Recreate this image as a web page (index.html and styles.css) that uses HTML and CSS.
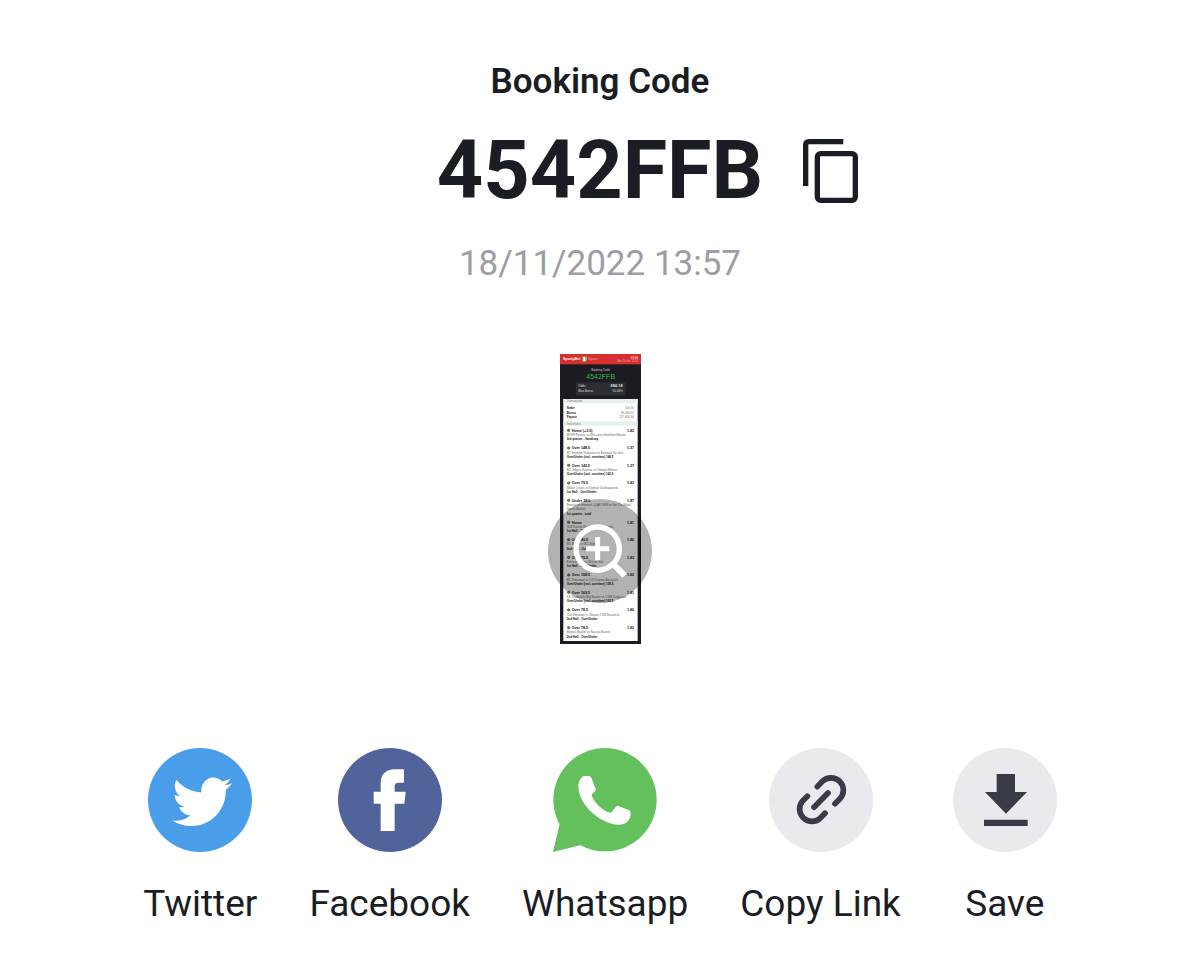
FILE: index.html
```html
<!DOCTYPE html>
<html lang="en">

<head>
    <meta charset="UTF-8">
    <meta name="viewport" content="width=device-width, initial-scale=1">
    <title>Booking Code</title>
    <link rel="stylesheet" href="styles.css">
</head>

<body>
    <main class="booking">
        <h1 class="booking-title">Booking Code</h1>
        <div class="code-row">
            <p class="code">4542FFB</p>
            <button class="copy-button" type="button" aria-label="Copy booking code">
                <svg class="copy-icon" viewBox="0 0 165 192" fill="none" stroke="currentColor" stroke-width="16">
                    <path d="M8 141V18Q8 8 18 8H121" />
                    <rect x="43" y="44" width="114" height="140" rx="10" />
                </svg>
            </button>
        </div>
        <time class="date" datetime="2022-11-18T13:57">18/11/2022 13:57</time>

        <div class="preview">
            <!-- ticket preview -->
            <svg class="ticket" viewBox="0 0 243 870" role="img" aria-label="Ticket 4542FFB">
                <rect width="243" height="870" fill="#1b1c22" />
                <rect width="243" height="31" fill="#d5302f" />
                <g fill="#fff">
                    <text class="t-brand" x="9" y="19">SportyBet</text>
                    <rect x="66" y="8" width="14" height="14" rx="2" />
                    <rect x="66" y="8" width="4" height="14" fill="#7d9a55" />
                    <rect x="76" y="8" width="4" height="14" fill="#7d9a55" />
                    <text class="t-tiny" x="84" y="18" fill="#f3a5a3">Nigeria</text>
                    <text class="t-tiny" x="234" y="14" text-anchor="end">13:56</text>
                    <text class="t-tiny" x="234" y="24" text-anchor="end" fill="#f3a5a3">Bet Ticket 1122</text>
                </g>
                <text class="t-label" x="122" y="51" text-anchor="middle" fill="#ccc">Booking Code</text>
                <text class="t-code" x="122" y="76" text-anchor="middle">4542FFB</text>
                <rect x="48" y="85" width="149" height="40" fill="#2c2e36" />
                <g fill="#ddd">
                    <text class="t-label" x="55" y="99">Odds</text>
                    <text class="t-label" x="55" y="115">Max Bonus</text>
                    <text class="t-odds" x="188" y="99" text-anchor="end">884.18</text>
                    <text class="t-tiny" x="188" y="114" text-anchor="end">90.00%</text>
                </g>
                <rect x="10" y="135" width="223" height="726" fill="#fff" />
                <rect x="10" y="135" width="223" height="13" fill="#e8f0ec" />
                <rect x="10" y="202" width="223" height="13" fill="#e8f0ec" />
                <g fill="#777">
                    <text class="t-label" x="20" y="145">Transaction</text>
                    <text class="t-label" x="20" y="212">Selections</text>
                    <text class="t-label" x="222" y="165" text-anchor="end">100.00</text>
                    <text class="t-label" x="222" y="179" text-anchor="end">39,066.87</text>
                    <text class="t-label" x="222" y="192" text-anchor="end">127,486.84</text>
                </g>
                <g class="t-rule">
                    <text x="20" y="165">Stake</text>
                    <text x="20" y="179">Bonus</text>
                    <text x="20" y="192">Payout</text>
                </g>

                <g transform="translate(0 233)">
                    <circle class="t-dot" cx="26" cy="-4" r="4" />
                    <text class="t-pick" x="35">Home (+3.5)</text>
                    <text class="t-pick" x="222" text-anchor="end">1.82</text>
                    <text class="t-teams" x="20" y="13">MTSP Pozitus vs Maccinno Brooklen Moose</text>
                    <text class="t-rule" x="20" y="26">3rd quarter - handicap</text>
                </g>
                <g transform="translate(0 286)">
                    <circle class="t-dot" cx="26" cy="-4" r="4" />
                    <text class="t-pick" x="35">Over 148.5</text>
                    <text class="t-pick" x="222" text-anchor="end">1.37</text>
                    <text class="t-teams" x="20" y="13">BC Fenham Salpanes vs Bauman Tai Jeni</text>
                    <text class="t-rule" x="20" y="26">Over/Under (incl. overtime) 148.5</text>
                </g>
                <g transform="translate(0 338)">
                    <circle class="t-dot" cx="26" cy="-4" r="4" />
                    <text class="t-pick" x="35">Over 143.5</text>
                    <text class="t-pick" x="222" text-anchor="end">1.37</text>
                    <text class="t-teams" x="20" y="13">BC Zalgiris Kaunas vs Olimpia Milano</text>
                    <text class="t-rule" x="20" y="26">Over/Under (incl. overtime) 143.5</text>
                </g>
                <g transform="translate(0 391)">
                    <circle class="t-dot" cx="26" cy="-4" r="4" />
                    <text class="t-pick" x="35">Over 79.5</text>
                    <text class="t-pick" x="222" text-anchor="end">1.83</text>
                    <text class="t-teams" x="20" y="13">Walter Leons vs Korihait Uusikaupunki</text>
                    <text class="t-rule" x="20" y="26">1st Half - Over/Under</text>
                </g>
                <g transform="translate(0 443)">
                    <circle class="t-dot" cx="26" cy="-4" r="4" />
                    <text class="t-pick" x="35">Under 38.5</text>
                    <text class="t-pick" x="222" text-anchor="end">1.87</text>
                    <text class="t-teams" x="20" y="13">Benfica vs Honved - (LAF 1989 or the 11a Wide)</text>
                    <text class="t-teams" x="20" y="26">Sports Basket</text>
                    <text class="t-rule" x="20" y="39">1st quarter - total</text>
                </g>
                <g transform="translate(0 509)">
                    <circle class="t-dot" cx="26" cy="-4" r="4" />
                    <text class="t-pick" x="35">Home</text>
                    <text class="t-pick" x="222" text-anchor="end">1.81</text>
                    <text class="t-teams" x="20" y="13">SLB Kortrijk Basket vs Palmeirinho</text>
                    <text class="t-rule" x="20" y="26">1st Half - 1X2</text>
                </g>
                <g transform="translate(0 561)">
                    <circle class="t-dot" cx="26" cy="-4" r="4" />
                    <text class="t-pick" x="35">Over 80.5</text>
                    <text class="t-pick" x="222" text-anchor="end">1.80</text>
                    <text class="t-teams" x="20" y="13">BC Minsk vs BC Samara</text>
                    <text class="t-rule" x="20" y="26">2nd Half - Over/Under</text>
                </g>
                <g transform="translate(0 614)">
                    <circle class="t-dot" cx="26" cy="-4" r="4" />
                    <text class="t-pick" x="35">Over 79.5</text>
                    <text class="t-pick" x="222" text-anchor="end">1.83</text>
                    <text class="t-teams" x="20" y="13">Partizan NIS vs Mornar Bar</text>
                    <text class="t-rule" x="20" y="26">1st Half - Over/Under</text>
                </g>
                <g transform="translate(0 667)">
                    <circle class="t-dot" cx="26" cy="-4" r="4" />
                    <text class="t-pick" x="35">Over 158.5</text>
                    <text class="t-pick" x="222" text-anchor="end">1.82</text>
                    <text class="t-teams" x="20" y="13">BC Timisoara vs CS Dinamo Bucuresti</text>
                    <text class="t-rule" x="20" y="26">Over/Under (incl. overtime) 158.5</text>
                </g>
                <g transform="translate(0 719)">
                    <circle class="t-dot" cx="26" cy="-4" r="4" />
                    <text class="t-pick" x="35">Over 163.5</text>
                    <text class="t-pick" x="222" text-anchor="end">1.81</text>
                    <text class="t-teams" x="20" y="13">KK Studentski Big Basket vs CSM Targoviste</text>
                    <text class="t-rule" x="20" y="26">Over/Under (incl. overtime) 163.5</text>
                </g>
                <g transform="translate(0 772)">
                    <circle class="t-dot" cx="26" cy="-4" r="4" />
                    <text class="t-pick" x="35">Over 78.5</text>
                    <text class="t-pick" x="222" text-anchor="end">1.80</text>
                    <text class="t-teams" x="20" y="13">Cso Voluntari vs Steaua CSM Bucuresti</text>
                    <text class="t-rule" x="20" y="26">2nd Half - Over/Under</text>
                </g>
                <g transform="translate(0 825)">
                    <circle class="t-dot" cx="26" cy="-4" r="4" />
                    <text class="t-pick" x="35">Over 78.5</text>
                    <text class="t-pick" x="222" text-anchor="end">1.83</text>
                    <text class="t-teams" x="20" y="13">Borgas Basket vs Nassjo Basket</text>
                    <text class="t-rule" x="20" y="26">2nd Half - Over/Under</text>
                </g>
            </svg>
            <button class="zoom-button" type="button" aria-label="Enlarge ticket">
                <svg class="zoom-icon" viewBox="0 0 312 312" fill="none" stroke="#fff">
                    <circle cx="149" cy="149" r="65" stroke-width="16" />
                    <path d="M195 195L230 230" stroke-width="18" />
                    <path d="M149 114V184M114 149H184" stroke-width="15" />
                </svg>
            </button>
        </div>

        <div class="share">
            <button class="share-item" type="button">
                <svg class="share-icon" viewBox="0 0 312 312">
                    <circle cx="156" cy="156" r="156" fill="#4a9de9" />
                    <path transform="translate(73 72) scale(7.45)" fill="#fff" d="M23.953 4.57a10 10 0 01-2.825.775 4.958 4.958 0 002.163-2.723c-.951.555-2.005.959-3.127 1.184a4.92 4.92 0 00-8.384 4.482C7.69 8.095 4.067 6.13 1.64 3.162a4.822 4.822 0 00-.666 2.475c0 1.71.87 3.213 2.188 4.096a4.904 4.904 0 01-2.228-.616v.06a4.923 4.923 0 003.946 4.827 4.996 4.996 0 01-2.212.085 4.936 4.936 0 004.604 3.417 9.867 9.867 0 01-6.102 2.105c-.39 0-.779-.023-1.17-.067a13.995 13.995 0 007.557 2.209c9.053 0 13.998-7.496 13.998-13.985 0-.21 0-.42-.015-.63A9.935 9.935 0 0024 4.59z" />
                </svg>
                <span>Twitter</span>
            </button>
            <button class="share-item" type="button">
                <svg class="share-icon" viewBox="0 0 312 312">
                    <circle cx="156" cy="156" r="156" fill="#50649b" />
                    <path fill="#fff" d="M128 249V167H107V131H128V106C128 79 144 64 171 64H198V104H181Q170 104 170 115V131H203L199 167H170V249Z" />
                </svg>
                <span>Facebook</span>
            </button>
            <button class="share-item" type="button">
                <svg class="share-icon" viewBox="0 0 312 312">
                    <circle cx="156" cy="155" r="155" fill="#64c05c" />
                    <path fill="#64c05c" d="M20 228L0 312L84 291Z" />
                    <path fill="#fff" d="M93 84H107Q113 84 115 89L128 122Q129 126 126 129L117 139Q115 142 117 146C130 170 150 187 170 194Q174 195 177 191L188 177Q191 173 196 174L229 187Q233 189 233 194C234 216 218 230 198 230C140 228 78 170 76 116C76 98 84 88 93 84Z" />
                </svg>
                <span>Whatsapp</span>
            </button>
            <button class="share-item" type="button">
                <svg class="share-icon" viewBox="0 0 312 312">
                    <circle cx="156" cy="156" r="156" fill="#e9eaee" />
                    <g fill="none" stroke="#373c47" stroke-width="17" stroke-linecap="round">
                        <path d="M145 116L160 100A37 37 0 0 1 212 153L198 167" />
                        <path d="M115 145L100 160A37 37 0 0 0 152 212L168 196" />
                        <path d="M135 178L177 135" />
                    </g>
                </svg>
                <span>Copy Link</span>
            </button>
            <button class="share-item" type="button">
                <svg class="share-icon" viewBox="0 0 312 312">
                    <circle cx="156" cy="156" r="156" fill="#e9eaee" />
                    <path fill="#373c47" d="M131 78H186V132H222L159 197L96 132H131ZM93 215H224V234H93Z" />
                </svg>
                <span>Save</span>
            </button>
        </div>
    </main>
</body>

</html>
```
FILE: styles.css
```css
* {
    box-sizing: border-box;
}

body {
    margin: 0;
    background: #fff;
    color: #1b1d24;
    font-family: Roboto, sans-serif;
}

h1,
p {
    margin: 0;
}

button {
    padding: 0;
    border: none;
    background: none;
    color: inherit;
    font: inherit;
    cursor: pointer;
}

svg {
    display: block;
}

.booking {
    display: flex;
    flex-direction: column;
    align-items: center;
    padding: 62px 20px 52px;
}

.booking-title {
    font-size: 35px;
    line-height: 40px;
    font-weight: 600;
}

.code-row {
    display: grid;
    grid-template-columns: 1fr auto 1fr;
    align-items: center;
    gap: 40px;
    width: 100%;
    margin-top: 21px;
}

.code {
    grid-column: 2;
    font-size: 81px;
    line-height: 96px;
    font-weight: 700;
}

.copy-button {
    justify-self: start;
}

.copy-icon {
    width: 55px;
    height: 64px;
}

.date {
    margin-top: 25px;
    font-size: 35px;
    line-height: 40px;
    color: #9c9da6;
}

.preview {
    position: relative;
    margin-top: 70px;
}

.ticket {
    width: 81px;
    height: 290px;
    font-family: "Liberation Sans", sans-serif;
}

.t-brand {
    font-size: 11px;
    font-weight: 700;
}

.t-tiny {
    font-size: 9px;
}

.t-label {
    font-size: 9px;
}

.t-code {
    font-size: 21px;
    fill: #35b558;
}

.t-odds {
    font-size: 12px;
    font-weight: 700;
}

.t-dot {
    fill: #777;
    stroke: #333;
}

.t-pick {
    font-size: 11px;
    font-weight: 700;
    fill: #111;
}

.t-teams {
    font-size: 9px;
    fill: #666;
}

.t-rule {
    font-size: 9px;
    font-weight: 700;
    fill: #111;
}

.zoom-button {
    position: absolute;
    bottom: 41px;
    left: 50%;
    transform: translateX(-50%);
    border-radius: 50%;
    background: rgba(0, 0, 0, 0.3);
}

.zoom-icon {
    width: 104px;
    height: 104px;
}

.share {
    display: flex;
    flex-wrap: wrap;
    justify-content: center;
    gap: 52px;
    margin-top: 104px;
}

.share-item {
    display: flex;
    flex-direction: column;
    align-items: center;
    gap: 32px;
    font-size: 37px;
    line-height: 40px;
}

.share-icon {
    width: 104px;
    height: 104px;
}
```
